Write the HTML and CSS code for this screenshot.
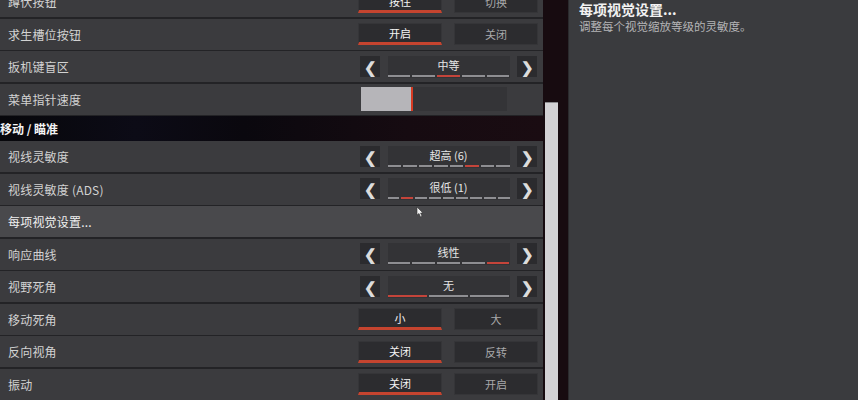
FILE: index.html
```html
<!DOCTYPE html>
<html lang="zh-CN">
<head>
<meta charset="utf-8">
<title>设置</title>
<link rel="stylesheet" href="styles.css">
</head>
<body>
<div class="screen">
  <div class="left">
    <div class="list">
      <div class="row">
        <span class="label">蹲伏按钮</span>
        <div class="pair">
          <div class="btn on">按住</div>
          <div class="btn">切换</div>
        </div>
      </div>
      <div class="row">
        <span class="label">求生槽位按钮</span>
        <div class="pair">
          <div class="btn on">开启</div>
          <div class="btn">关闭</div>
        </div>
      </div>
      <div class="row">
        <span class="label">扳机键盲区</span>
        <div class="sel">
          <div class="arrow">&#10094;</div>
          <div class="mid">
            <span class="val">中等</span>
            <div class="segs"><i></i><i></i><i class="r"></i><i></i><i></i></div>
          </div>
          <div class="arrow">&#10095;</div>
        </div>
      </div>
      <div class="row">
        <span class="label">菜单指针速度</span>
        <div class="slider"><div class="fill"></div></div>
      </div>
      <div class="section">移动 / 瞄准</div>
      <div class="row">
        <span class="label">视线灵敏度</span>
        <div class="sel">
          <div class="arrow">&#10094;</div>
          <div class="mid">
            <span class="val">超高 (6)</span>
            <div class="segs"><i></i><i></i><i></i><i></i><i></i><i class="r"></i><i></i><i></i></div>
          </div>
          <div class="arrow">&#10095;</div>
        </div>
      </div>
      <div class="row">
        <span class="label">视线灵敏度 (ADS)</span>
        <div class="sel">
          <div class="arrow">&#10094;</div>
          <div class="mid">
            <span class="val">很低 (1)</span>
            <div class="segs"><i></i><i class="r"></i><i></i><i></i><i></i><i></i><i></i><i></i><i></i></div>
          </div>
          <div class="arrow">&#10095;</div>
        </div>
      </div>
      <div class="row hl">
        <span class="label">每项视觉设置...</span>
      </div>
      <div class="row">
        <span class="label">响应曲线</span>
        <div class="sel">
          <div class="arrow">&#10094;</div>
          <div class="mid">
            <span class="val">线性</span>
            <div class="segs"><i></i><i></i><i></i><i></i><i class="r"></i></div>
          </div>
          <div class="arrow">&#10095;</div>
        </div>
      </div>
      <div class="row">
        <span class="label">视野死角</span>
        <div class="sel">
          <div class="arrow">&#10094;</div>
          <div class="mid">
            <span class="val">无</span>
            <div class="segs"><i class="r"></i><i></i><i></i></div>
          </div>
          <div class="arrow">&#10095;</div>
        </div>
      </div>
      <div class="row">
        <span class="label">移动死角</span>
        <div class="pair">
          <div class="btn on">小</div>
          <div class="btn">大</div>
        </div>
      </div>
      <div class="row">
        <span class="label">反向视角</span>
        <div class="pair">
          <div class="btn on">关闭</div>
          <div class="btn">反转</div>
        </div>
      </div>
      <div class="row">
        <span class="label">振动</span>
        <div class="pair">
          <div class="btn on">关闭</div>
          <div class="btn">开启</div>
        </div>
      </div>
    </div>
    <svg class="cursor" width="8" height="12" viewBox="0 0 8 12"><path d="M1 1 L1 9 L3 7.5 L4.5 11 L6 10.3 L4.6 7 L7 7 Z" fill="#f2f2f2" stroke="#333" stroke-width="0.6"/></svg>
  </div>
  <div class="gutter">
    <div class="thumb"></div>
  </div>
  <div class="right">
    <div class="title">每项视觉设置...</div>
    <div class="desc">调整每个视觉缩放等级的灵敏度。</div>
  </div>
</div>
</body>
</html>
```
FILE: styles.css
```css
html, body {
  margin: 0;
  padding: 0;
  background: #160b0f;
  font-family: "Noto Sans CJK SC", "Noto Sans", "Liberation Sans", sans-serif;
}
.screen {
  display: flex;
  width: 858px;
  height: 400px;
  overflow: hidden;
}
.left {
  position: relative;
  width: 543px;
  height: 400px;
  overflow: hidden;
  flex: none;
}
.list {
  display: flex;
  flex-direction: column;
  gap: 1.5px;
  margin-top: -14px;
  background: #232326;
}
.row {
  height: 31px;
  flex: none;
  display: flex;
  align-items: center;
  padding: 0 5px 0 8px;
  background: #3b3b3e;
}
.row.hl {
  background: #49494c;
}
.row.hl .label {
  color: #f0f0f0;
}
.label {
  flex: 1;
  font-size: 12px;
  color: #d2d2d2;
  letter-spacing: 0.2px;
}
.section {
  height: 25px;
  margin: 0 0 -1.5px;
  flex: none;
  display: flex;
  align-items: center;
  font-size: 12px;
  font-weight: bold;
  color: #f4f4f4;
  background: linear-gradient(90deg, #07070b 0%, #0c0b16 25%, #0a080e 45%, #160b11 75%, #1a0c12 100%);
}
.pair {
  width: 180px;
  display: flex;
  gap: 12px;
}
.btn {
  flex: 1;
  height: 22px;
  box-sizing: border-box;
  background: #2c2c2f;
  border: 1px solid #353538;
  color: #a9a9ab;
  font-size: 11px;
  display: flex;
  align-items: center;
  justify-content: center;
}
.btn.on {
  color: #f4f4f4;
  border-bottom: 3px solid #c5442f;
}
.sel {
  width: 180px;
  box-sizing: border-box;
  padding: 0 1px 0 2px;
  display: flex;
  gap: 7.5px;
}
.arrow {
  width: 20px;
  height: 21px;
  background: #2b2b2e;
  color: #dcdcdc;
  font-size: 15px;
  font-weight: bold;
  display: flex;
  align-items: center;
  justify-content: center;
}
.mid {
  flex: 1;
  height: 22px;
  background: #333336;
  display: flex;
  flex-direction: column;
  align-items: center;
  justify-content: space-between;
}
.val {
  font-size: 11px;
  line-height: 18px;
  color: #e6e6e6;
}
.segs {
  align-self: stretch;
  display: flex;
  gap: 2px;
  margin: 0 0 1px;
}
.segs i {
  flex: 1;
  height: 2px;
  background: #8e8e92;
}
.segs i.r {
  background: #c4443a;
}
.slider {
  width: 146px;
  height: 24px;
  margin-right: 31px;
  background: #343437;
  display: flex;
}
.fill {
  width: 50px;
  background: #b6b5b9;
  border-right: 2px solid #d63a22;
}
.gutter {
  width: 25px;
  flex: none;
  height: 400px;
  box-sizing: border-box;
  padding: 102px 10px 0 2px;
  background: #170b10;
  display: flex;
  flex-direction: column;
}
.thumb {
  flex: 1;
  background: #d3d2d5;
  border-top: 1px solid #8a8a8d;
}
.right {
  flex: 1;
  height: 400px;
  background: #3a3b3e;
  padding: 1px 10px 0;
  border-left: 1px solid #2a2a2d;
}
.title {
  font-size: 14px;
  font-weight: bold;
  line-height: 17px;
  color: #f2f2f2;
}
.desc {
  margin-top: 2px;
  font-size: 11.5px;
  line-height: 13px;
  color: #b4b4b6;
}
.cursor {
  position: absolute;
  left: 416px;
  top: 206px;
}
```
